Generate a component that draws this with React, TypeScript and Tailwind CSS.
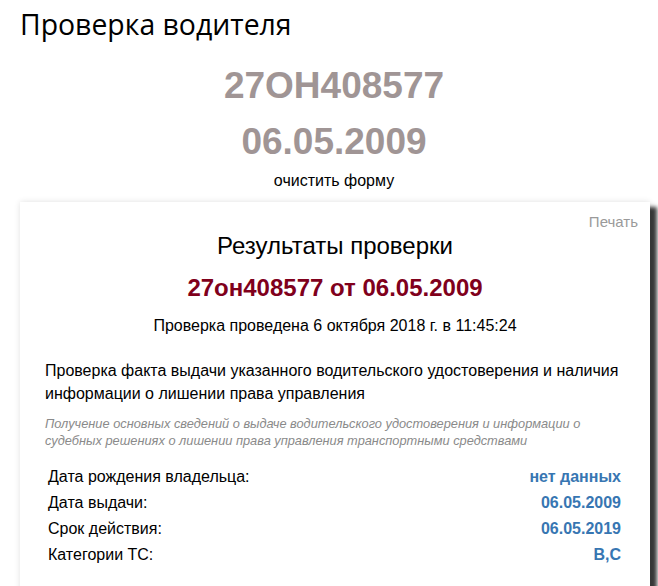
import React from 'react';

const rows = [
  { label: 'Дата рождения владельца:', value: 'нет данных' },
  { label: 'Дата выдачи:', value: '06.05.2009' },
  { label: 'Срок действия:', value: '06.05.2019' },
  { label: 'Категории ТС:', value: 'B,C' },
];

export default function App() {
  return (
    <div className="min-h-[586px] bg-white font-['Liberation_Sans',Arial,sans-serif] text-black overflow-hidden">
      <h1 className="pl-[20px] pt-[6px] text-[28.4px] leading-[36px] font-['Open_Sans','Noto_Sans',sans-serif] font-normal">
        Проверка водителя
      </h1>

      {/* entered values */}
      <div className="text-center pl-[10px] font-bold text-[37px] text-[#a09595]">
        <div className="mt-[16px] leading-[56px]">27OH408577</div>
        <div className="leading-[56px]">06.05.2009</div>
      </div>
      <div className="text-center pl-[10px] text-[16px] leading-[18px] mt-[2px]">
        <a className="cursor-pointer">очистить форму</a>
      </div>

      {/* result card */}
      <div className="ml-[20px] mt-[12px] w-[630px] bg-white shadow-[0_0_6px_rgba(0,0,0,0.12),7px_5px_4px_#3a3a3a] pb-[40px]">
        <div className="flex justify-end pr-[12px] pt-[11px] text-[15px] leading-[18px] text-[#9a9a9a]">
          Печать
        </div>
        <div className="text-center text-[24px] leading-[28px] mt-[1px]">Результаты проверки</div>
        <div className="text-center text-[24px] leading-[28px] font-bold text-[#80001c] mt-[14px]">
          27он408577 от 06.05.2009
        </div>
        <div className="text-center text-[16px] leading-[19px] mt-[14px]">
          Проверка проведена 6 октября 2018 г. в 11:45:24
        </div>

        <div className="pl-[25px] pr-[26px] mt-[24px]">
          <p className="text-[16px] leading-[23px] pr-[2px]">
            Проверка факта выдачи указанного водительского удостоверения и наличия информации о лишении права управления
          </p>
          <p className="mt-[10px] text-[12.8px] leading-[17px] italic text-[#8a8a8a]">
            Получение основных сведений о выдаче водительского удостоверения и информации о судебных решениях о лишении права управления транспортными средствами
          </p>

          <div className="mt-[15px] flex flex-col">
            {rows.map((r) => (
              <div key={r.label} className="flex justify-between px-[3px] text-[16px] leading-[26px]">
                <span>{r.label}</span>
                <span className="font-bold text-[#3776b2]">{r.value}</span>
              </div>
            ))}
          </div>
        </div>
      </div>
    </div>
  );
}
